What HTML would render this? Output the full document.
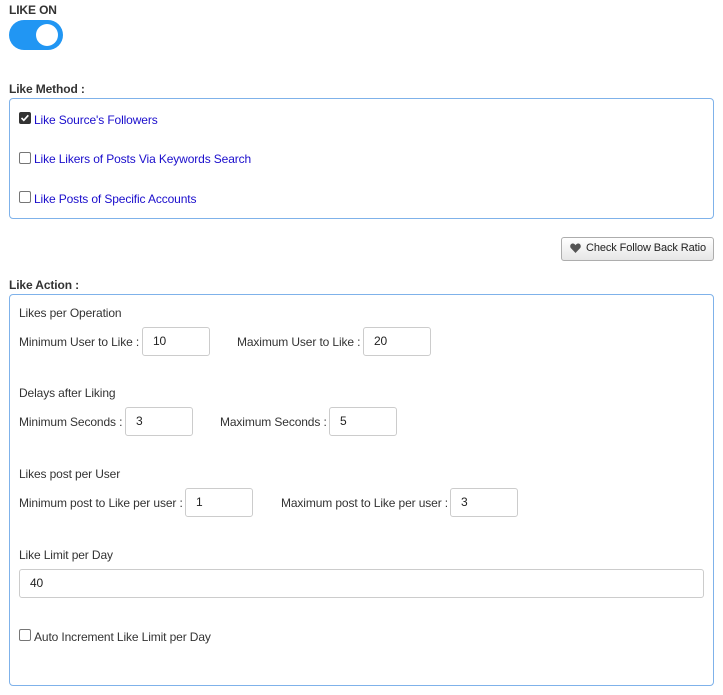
<!DOCTYPE html>
<html><head><style>
body{margin:0;width:723px;height:695px;background:#fff;font-family:"Liberation Sans",Arial,sans-serif;font-size:12px;letter-spacing:-0.12px;color:#333;position:relative;overflow:hidden}
.a{position:absolute;white-space:nowrap}
.b{font-weight:bold}
.box{position:absolute;border:1px solid #7fb2ea;border-radius:4px;left:9px;width:703px}
.cb{position:absolute;width:12px;height:12px;border:1px solid #767676;border-radius:2px;background:#fff;box-sizing:border-box}
.lnk{color:#1a0dcc}
.in{position:absolute;border:1px solid #ccc;border-radius:3px;height:29px;box-sizing:border-box;padding-left:10px;line-height:27px;font-size:12px;color:#222}
</style></head><body>
<div class="a b" style="left:9px;top:3px">LIKE ON</div>
<div class="a" style="left:9px;top:20px;width:54px;height:30px;border-radius:15px;background:#2196f3"></div>
<div class="a" style="left:36px;top:24px;width:22px;height:22px;border-radius:50%;background:#fff"></div>
<div class="a b" style="left:9px;top:82px">Like Method :</div>
<div class="box" style="top:98px;height:119px"></div>
<div class="cb" style="left:19px;top:112px;background:#333;border-color:#333"></div>
<svg class="a" style="left:19px;top:112px" width="12" height="12"><path d="M2.5 6l2.3 2.3 4.5-5" stroke="#fff" stroke-width="1.7" fill="none"/></svg>
<div class="a lnk" style="left:34px;top:113px">Like Source's Followers</div>
<div class="cb" style="left:19px;top:152px"></div>
<div class="a lnk" style="left:34px;top:152px">Like Likers of Posts Via Keywords Search</div>
<div class="cb" style="left:19px;top:191px"></div>
<div class="a lnk" style="left:34px;top:192px">Like Posts of Specific Accounts</div>
<div class="a" style="left:561px;top:237px;width:151px;height:22px;border:1px solid #adadad;border-radius:3px;background:linear-gradient(#fff,#e6e6e6);box-sizing:content-box"></div>
<svg class="a" style="left:570px;top:243px" width="11" height="10"><path d="M5.5 10L1 5.3C-0.5 3.6 0.3 0.5 2.8 0.5 4.2 0.5 5 1.5 5.5 2.3 6 1.5 6.8 0.5 8.2 0.5 10.7 0.5 11.5 3.6 10 5.3Z" fill="#555"/></svg>
<div class="a" style="left:586px;top:242px;color:#222;font-size:11px;letter-spacing:-0.1px">Check Follow Back Ratio</div>
<div class="a b" style="left:9px;top:278px">Like Action :</div>
<div class="box" style="top:294px;height:390px"></div>
<div class="a" style="left:19px;top:306px">Likes per Operation</div>
<div class="a" style="left:19px;top:335px">Minimum User to Like :</div>
<div class="in" style="left:142px;top:327px;width:68px">10</div>
<div class="a" style="left:237px;top:335px">Maximum User to Like :</div>
<div class="in" style="left:363px;top:327px;width:68px">20</div>
<div class="a" style="left:19px;top:386px">Delays after Liking</div>
<div class="a" style="left:19px;top:415px">Minimum Seconds :</div>
<div class="in" style="left:125px;top:407px;width:68px">3</div>
<div class="a" style="left:220px;top:415px">Maximum Seconds :</div>
<div class="in" style="left:329px;top:407px;width:68px">5</div>
<div class="a" style="left:19px;top:467px">Likes post per User</div>
<div class="a" style="left:19px;top:496px">Minimum post to Like per user :</div>
<div class="in" style="left:185px;top:488px;width:68px">1</div>
<div class="a" style="left:281px;top:496px">Maximum post to Like per user :</div>
<div class="in" style="left:450px;top:488px;width:68px">3</div>
<div class="a" style="left:19px;top:548px">Like Limit per Day</div>
<div class="in" style="left:19px;top:569px;width:685px">40</div>
<div class="cb" style="left:19px;top:629px"></div>
<div class="a" style="left:34px;top:630px">Auto Increment Like Limit per Day</div>
</body></html>
